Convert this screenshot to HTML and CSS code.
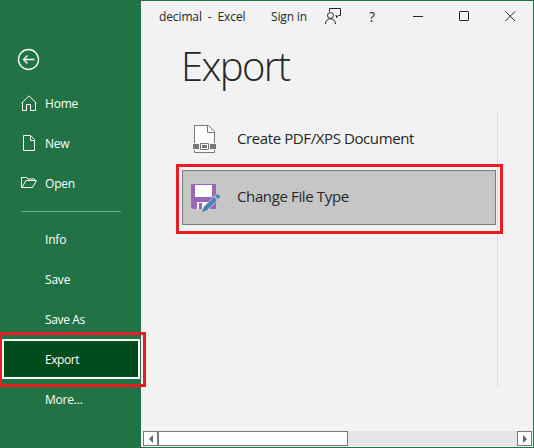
FILE: index.html
```html
<!DOCTYPE html>
<html lang="en">
<head>
<meta charset="utf-8">
<title>decimal - Excel</title>
<link rel="stylesheet" href="styles.css">
</head>
<body>
<nav class="sidebar">
  <a class="back"><svg width="23" height="23" viewBox="0 0 23 23"><circle cx="11.5" cy="11.5" r="10" stroke-width="1.3"/><path d="M17.500 11.5H6.500M10.500 7.500l-4 4 4 4" stroke-width="1.3"/></svg></a>
  <a class="item"><svg class="icon" width="16" height="16" viewBox="0 0 16 16"><path d="M.5 8.3 8 .8l7.500 7.500M1.500 7.500v8h4v-6h4v6h5v-8"/></svg><span>Home</span></a>
  <a class="item"><svg class="icon" width="16" height="16" viewBox="0 0 16 16"><path d="M2.500.5h7l4 4v11h-11zM9.500.5v5h4"/></svg><span>New</span></a>
  <a class="item"><svg class="icon" width="16" height="16" viewBox="0 0 16 16"><path d="M2 12.500H.5V2.500h5l1.500 1.500h6.500v1.500M1 12.500 5 5.500h10.500l-4 7z"/></svg><span>Open</span></a>
  <hr class="rule">
  <a class="item text"><span>Info</span></a>
  <a class="item text"><span>Save</span></a>
  <a class="item text"><span class="save-as">Save As</span></a>
  <a class="item text selected"><span class="export-label">Export</span></a>
  <a class="item text"><span>More...</span></a>
  <div class="mark mark-nav"></div>
</nav>
<main class="page">
  <header class="titlebar">
    <span class="doc">decimal&nbsp; -&nbsp; Excel</span>
    <span class="signin">Sign in</span>
    <svg class="person" width="18" height="18" viewBox="0 0 18 18"><path d="M4.500 3.500v-3h11v7h-2l-2 2v-2h-1"/><circle cx="5.500" cy="7.500" r="3"/><path d="M.5 16c0-7 10-7 10 0"/></svg>
    <span class="help">?</span>
    <svg class="min" width="11" height="11" viewBox="0 0 11 11"><path d="M0 5.500h10"/></svg>
    <svg class="max" width="11" height="11" viewBox="0 0 11 11"><rect x=".5" y=".5" width="9" height="9" rx=".5"/></svg>
    <svg class="close" width="11" height="11" viewBox="0 0 11 11"><path d="m.5.5 9.500 9.500M10 .5.5 10"/></svg>
  </header>
  <h1>Export</h1>
  <section class="options">
    <div class="option">
      <svg class="doc-icon" width="30" height="30" viewBox="0 0 30 30"><path d="M5.500 19V1.500h14l6 6V19" fill="#fff" stroke="#777"/><path d="M18.500 1.500v7h7" fill="none" stroke="#777"/><path d="M5.500 26v2.500h20V26" fill="#fff" stroke="#777"/><path d="M4 20h6v5H4zM21 20h6v5h-6z" fill="#777"/><path d="M11.500 19.500h8v6h-8z" fill="#fff" stroke="#777"/><path d="M13 21h5v3h-5z" fill="#777"/></svg>
      <span class="create">Create PDF/XPS Document</span>
    </div>
    <div class="option active">
      <svg class="disk-icon" width="30" height="30" viewBox="0 0 30 30"><path d="M1 1h25v25H3l-2-2z" fill="#9668b7"/><path d="M5 2h17v12H5zM7 19h13v7H7z" fill="#fff"/><path d="M9 20h3v6H9z" fill="#9668b7"/><path d="m12 29 2-6L26 11l4 4-12 12z" fill="#c6c6c6"/><path d="m12 29 1.500-4.500L24 14l3 3L16.500 27.500zM25 13l1.500-1.500h2l1.500 1.500v1.500L28 16z" fill="#4a82bd"/></svg>
      <span class="change">Change File Type</span>
      <div class="mark mark-option"></div>
    </div>
  </section>
  <div class="scrollbar">
    <div class="btn"><svg width="4" height="8" viewBox="0 0 4 8"><path d="M4 0v8L0 4z"/></svg></div>
    <div class="thumb"></div>
    <div class="btn right"><svg width="4" height="8" viewBox="0 0 4 8"><path d="M0 0v8l4-4z"/></svg></div>
  </div>
</main>
</body>
</html>
```
FILE: styles.css
```css
* { box-sizing: border-box; }
body {
  margin: 0;
  width: 534px;
  height: 448px;
  display: flex;
  overflow: hidden;
  background: #f2f2f2;
  font: 12px "Open Sans", "Noto Sans", sans-serif;
  color: #262626;
}
svg { display: block; flex: none; fill: none; }
span { white-space: nowrap; }

.sidebar {
  position: relative;
  z-index: 1;
  width: 141px;
  height: 448px;
  padding-top: 48px;
  background: #217346;
  color: #fff;
  stroke: #fff;
}
.sidebar span { stroke: none; letter-spacing: -0.2px; }
.sidebar .save-as { letter-spacing: -0.35px; }
.sidebar .export-label { letter-spacing: -0.45px; }
.back { display: block; height: 35px; padding-left: 17px; }
.item { display: flex; align-items: center; height: 40px; padding-left: 21px; }
.icon { margin-right: 8px; }
.rule { width: 100px; height: 1px; margin: 8px 0 7px 21px; border: 0; background: #72b18c; }
.text { padding-left: 45px; }
.selected {
  margin: 0 1px 0 2px;
  padding-left: 41px;
  border: 2px solid #fff;
  background: #004b1c;
}
.mark { position: absolute; border: 3px solid #ed1c24; }
.mark-nav { left: -1px; top: 332px; width: 147px; height: 55px; }

.page {
  width: 393px;
  height: 448px;
  display: flex;
  flex-direction: column;
  border: 1px solid #217346;
  border-left: 0;
}
.titlebar { display: flex; align-items: center; height: 31px; padding-left: 18px; stroke: #262626; }
.titlebar span { stroke: none; }
.doc { width: 112px; letter-spacing: -0.12px; }
.signin { width: 54px; letter-spacing: -0.15px; }
.person { width: 18px; }
.help { width: 25px; margin-left: 26px; font-size: 14px; }
.min { margin-left: 19px; }
.max { margin-left: 35px; }
.close { margin-left: 35px; }
h1 {
  margin: 7px 0 0 40px;
  height: 73px;
  font-size: 40px;
  line-height: 54px;
  font-weight: 300;
  letter-spacing: -1.6px;
}
.options { width: 357px; height: 276px; border-right: 1px solid #dedede; }
.option {
  position: relative;
  display: flex;
  align-items: center;
  width: 314px;
  height: 54px;
  margin-left: 41px;
  padding-left: 7px;
  font-size: 15px;
}
.option svg { margin-right: 18px; }
.option span { margin-bottom: 2px; letter-spacing: -0.4px; }
.option .change { margin: 0 0 3px -1px; letter-spacing: -0.37px; }
.active { height: 55px; margin-top: 4px; border: 1px solid #7c7c7c; background: #c6c6c6; }
.mark-option { left: -7px; top: -7px; width: 327px; height: 70px; }
.scrollbar { display: flex; width: 389px; height: 15px; margin: auto 0 1px 2px; background: #e6e6e6; }
.btn { width: 15px; display: flex; align-items: center; justify-content: center; border: 1px solid #777; background: #fff; }
.btn path { fill: #666; }
.thumb { width: 190px; border: 1px solid #777; background: #fff; }
.right { margin-left: auto; }
```
